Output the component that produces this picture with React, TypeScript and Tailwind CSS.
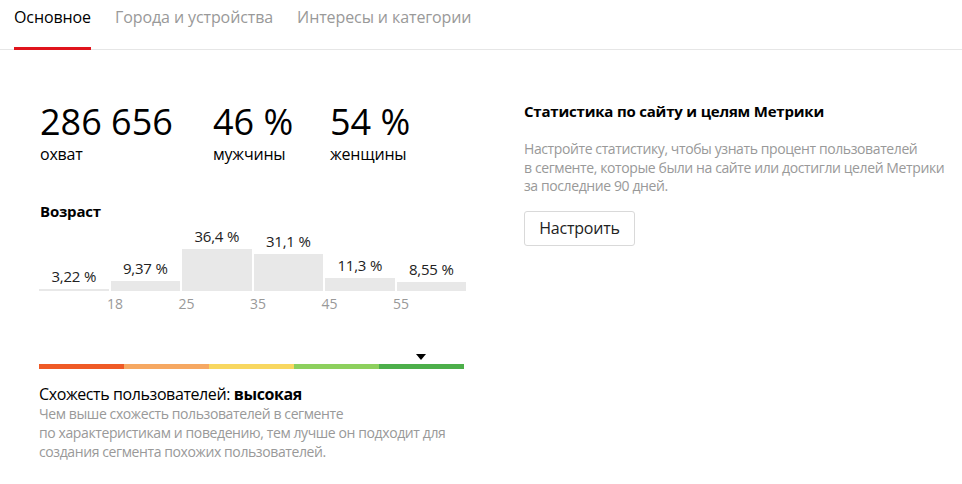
import React from "react"

const FONT = { fontFamily: '"Open Sans", "Noto Sans", sans-serif' }

const tabs = ["Основное", "Города и устройства", "Интересы и категории"]

const ages = [
  { label: "3,22 %", h: 2 },
  { label: "9,37 %", h: 10 },
  { label: "36,4 %", h: 42 },
  { label: "31,1 %", h: 37 },
  { label: "11,3 %", h: 13 },
  { label: "8,55 %", h: 9 },
]

const ticks = ["18", "25", "35", "45", "55"]

const similarity = ["bg-[#ef5a26]", "bg-[#f6a862]", "bg-[#f8d760]", "bg-[#8dd05d]", "bg-[#4caf4a]"]

function Stat({ value, label, width }: { value: string; label: string; width: string }) {
  return (
    <div className={`flex flex-col ${width}`}>
      <span className="whitespace-nowrap text-[36px] leading-[46px] text-black">{value}</span>
      <span className="text-[16px] leading-[18px] tracking-[-0.2px] text-black">{label}</span>
    </div>
  )
}

export default function App() {
  return (
    <div className="h-[484px] w-[962px] overflow-hidden bg-white text-black" style={FONT}>
      <nav className="flex h-[50px] gap-[24px] border-b border-[#e6e6e6] px-[14px]">
        {tabs.map((tab, i) => (
          <div
            key={tab}
            className={`flex h-[50px] items-start pt-[6px] text-[16px] leading-[22px] tracking-[-0.1px] ${
              i === 0 ? "border-b-[3px] border-[#e0141c] text-black" : "text-[#999]"
            }`}
          >
            {tab}
          </div>
        ))}
      </nav>

      <div className="flex pl-[39px] pt-[49px]">
        <div className="w-[427px]">
          <div className="flex pl-[1px]">
            <Stat value="286 656" label="охват" width="w-[173px]" />
            <Stat value="46 %" label="мужчины" width="w-[117px]" />
            <Stat value="54 %" label="женщины" width="w-[100px]" />
          </div>

          <h3 className="mt-[38px] pl-[1px] text-[15px] font-bold leading-[20px] tracking-[-0.2px]">Возраст</h3>

          <div className="mt-[2px] flex h-[68px] items-end gap-[2px]">
            {ages.map((a) => (
              <div key={a.label} className="flex flex-1 flex-col items-center">
                <span className="mb-[3px] text-[15px] leading-[19px] tracking-[-0.2px] text-[#222]">{a.label}</span>
                <div className="w-full bg-[#e8e8e8]" style={{ height: a.h }} />
              </div>
            ))}
          </div>

          <div className="relative mt-[3px] h-[20px] text-[14px] leading-[20px] text-[#999]">
            {ticks.map((t, i) => (
              <span key={t} className="absolute top-0" style={{ left: 68 + i * 71.5 }}>
                {t}
              </span>
            ))}
          </div>

          <div className="relative mt-[50px]">
            <div className="absolute left-[377px] top-[-10px] h-0 w-0 border-x-[5.5px] border-t-[6px] border-x-transparent border-t-black" />
            <div className="flex h-[5px] w-[425px]">
              {similarity.map((c) => (
                <div key={c} className={`flex-1 ${c}`} />
              ))}
            </div>
          </div>

          <p className="mt-[15px] whitespace-nowrap text-[16px] leading-[20px] tracking-[-0.4px]">
            Схожесть пользователей: <b className="font-bold">высокая</b>
          </p>
          <p className="whitespace-nowrap text-[14px] leading-[19px] tracking-[-0.4px] text-[#999]">
            Чем выше схожесть пользователей в сегменте
            <br />
            по характеристикам и поведению, тем лучше он подходит для
            <br />
            создания сегмента похожих пользователей.
          </p>
        </div>

        <div className="ml-[58px] pt-[2px]">
          <h3 className="whitespace-nowrap text-[15px] font-bold leading-[20px] tracking-[-0.2px]">
            Статистика по сайту и целям Метрики
          </h3>
          <p className="mt-[19px] whitespace-nowrap text-[14px] leading-[18.5px] tracking-[-0.4px] text-[#999]">
            Настройте статистику, чтобы узнать процент пользователей
            <br />
            в сегменте, которые были на сайте или достигли целей Метрики
            <br />
            за последние 90 дней.
          </p>
          <button
            type="button"
            className="mt-[15px] h-[35px] w-[111px] rounded-[3px] border border-[#d9d9d9] bg-white text-[16px] tracking-[-0.2px] text-[#222]"
          >
            Настроить
          </button>
        </div>
      </div>
    </div>
  )
}
